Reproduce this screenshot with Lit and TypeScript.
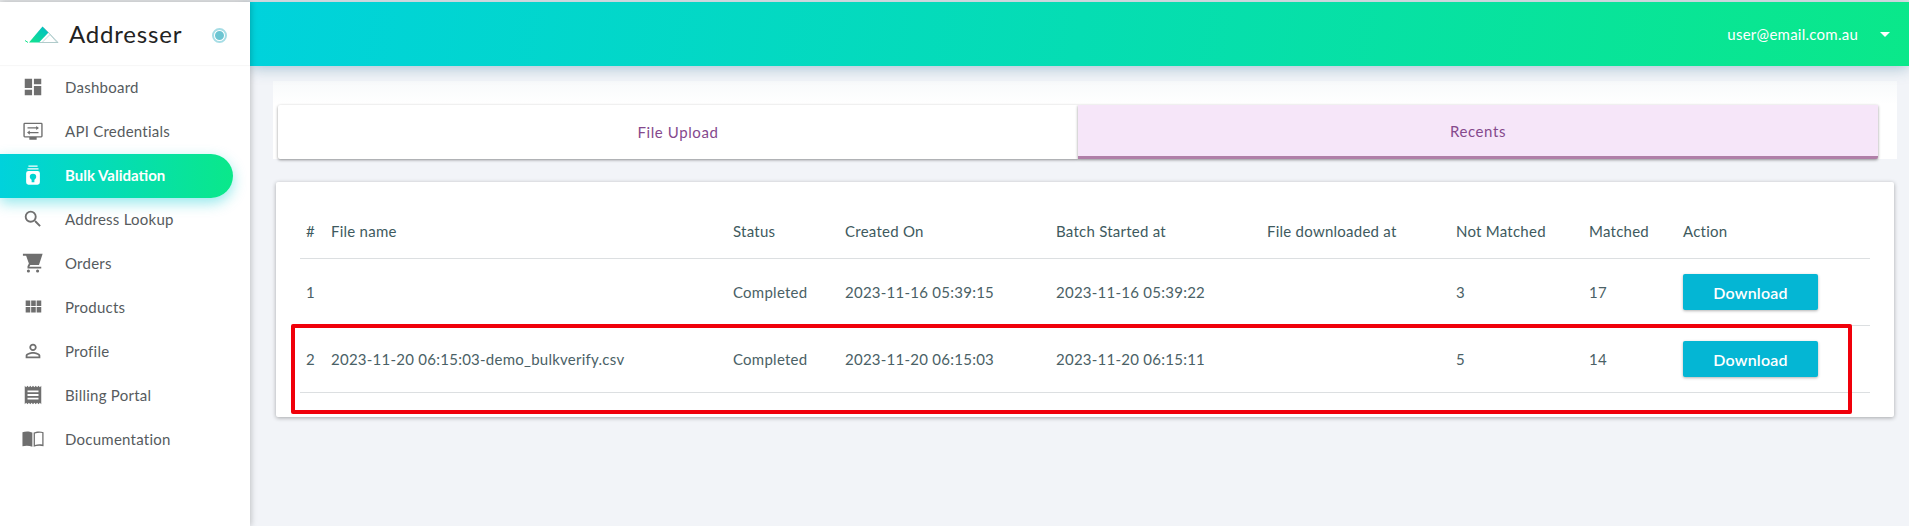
import { LitElement, html, css, svg } from "lit";
import { customElement } from "lit/decorators.js";

const P = (d: string) => svg`<path d=${d}></path>`;
const nav = [
  { label: "Dashboard", icon: P("M3 13h8V3H3v10zm0 8h8v-6H3v6zm10 0h8V11h-8v10zm0-18v6h8V3h-8z") },
  { label: "API Credentials", icon: svg`<path fill-rule="evenodd" d="M3 3h18a1.500 1.500 0 0 1 1.500 1.500v13A1.500 1.500 0 0 1 21 19h-5v2.500H8V19H3a1.500 1.500 0 0 1-1.500-1.500v-13A1.500 1.500 0 0 1 3 3zm0 1.300v13.400h18V4.300z"></path><path d="M6 8h9.500V6.500L18.500 8.700 15.500 11V9.400H6zM18 13H8.500v-1.500L5.500 13.700 8.500 16v-1.600H18z"></path>` },
  { label: "Bulk Validation", active: true, icon: svg`<path d="M7 1.500h10V3H7zM6 4.500h12V6H6zM7 7.500h10A2.500 2.500 0 0 1 19.500 10v10a2.500 2.500 0 0 1-2.500 2.500H7A2.500 2.500 0 0 1 4.500 20V10A2.500 2.500 0 0 1 7 7.500zM12 10.500a3.500 3.500 0 0 0-3.500 3.500c0 1.500 1 2.500 2 3.200V20h3v-2.800c1-.7 2-1.700 2-3.200a3.500 3.500 0 0 0-3.500-3.500z" fill-rule="evenodd"></path>` },
  { label: "Address Lookup", icon: P("M15.500 14h-.79l-.28-.27A6.471 6.471 0 0 0 16 9.500 6.500 6.500 0 1 0 9.500 16c1.610 0 3.090-.59 4.230-1.570l.27.28v.79l5 4.990L20.490 19l-4.990-5zm-6 0C7.010 14 5 11.990 5 9.500S7.010 5 9.500 5 14 7.010 14 9.500 11.990 14 9.500 14z") },
  { label: "Orders", icon: P("M7 19a1.700 1.700 0 1 0 0 3.400A1.700 1.700 0 0 0 7 19zm10 0a1.700 1.700 0 1 0 0 3.400 1.700 1.700 0 0 0 0-3.400zM1 2v2h3.500l3 8.500L6 15.500V18h15v-2H8l1-1.800h9.500L22.500 2z") },
  { label: "Products", icon: P("M4 11h5V5H4v6zm0 7h5v-6H4v6zm6 0h5v-6h-5v6zm6 0h5v-6h-5v6zm-6-7h5V5h-5v6zm6-6v6h5V5h-5z") },
  { label: "Profile", icon: P("M12 5.900a2.100 2.100 0 1 1 0 4.200 2.100 2.100 0 0 1 0-4.200m0 9c2.970 0 6.100 1.460 6.100 2.100v1.100H5.900V17c0-.64 3.130-2.100 6.100-2.100M12 4C9.790 4 8 5.790 8 8s1.790 4 4 4 4-1.790 4-4-1.790-4-4-4zm0 9c-2.670 0-8 1.340-8 4v3h16v-3c0-2.660-5.330-4-8-4z") },
  { label: "Billing Portal", icon: P("M18 17H6v-2h12v2zm0-4H6v-2h12v2zm0-4H6V7h12v2zM3 22l1.500-1.500L6 22l1.500-1.500L9 22l1.500-1.500L12 22l1.500-1.500L15 22l1.500-1.500L18 22l1.500-1.500L21 22V2l-1.500 1.500L18 2l-1.500 1.500L15 2l-1.500 1.500L12 2l-1.500 1.500L9 2 7.500 3.500 6 2 4.500 3.500 3 2v20z") },
  { label: "Documentation", icon: P("M.5 4.500C3.500 3.500 8 3.300 11.300 5v15.500C8 19 3.500 19 .5 20zM12.700 5C16 3.300 20.500 3.500 23.500 4.500V20c-3-1-7.500-1-10.800.5zm1.400.9v12.600c2.500-.9 5.700-1 8-.5V5.500c-2.300-.5-5.500-.4-8 .4z") },
];

const columns = ["#", "File name", "Status", "Created On", "Batch Started at", "File downloaded at", "Not Matched", "Matched", "Action"];
const rows = [
  ["1", "", "Completed", "2023-11-16 05:39:15", "2023-11-16 05:39:22", "", "3", "17"],
  ["2", "2023-11-20 06:15:03-demo_bulkverify.csv", "Completed", "2023-11-20 06:15:03", "2023-11-20 06:15:11", "", "5", "14"],
];

@customElement("app-root")
export class AppRoot extends LitElement {
  static styles = css`
    :host {
      display: block;
      height: 526px;
      overflow: hidden;
      background: #f2f4f8;
      font-family: "Lato", "Liberation Sans", sans-serif;
      font-size: 15px;
      letter-spacing: 0.25px;
    }
    .app { display: flex; height: 526px; border-top: 2px solid #e4e6e8; box-sizing: border-box; }
    .side {
      width: 250px; flex: none; background: #fff;
      box-shadow: 1px 0 6px rgba(0, 0, 0, 0.22);
      position: relative; z-index: 3;
    }
    .brand {
      height: 63px; display: flex; align-items: center; padding-left: 24px;
      box-shadow: 0 1px 1px rgba(0, 0, 0, 0.03);
    }
    .brand svg { width: 36px; height: 20px; flex: none; margin-top: 2px; }
    .brand .name { margin-left: 9px; font-size: 24px; letter-spacing: 0.8px; color: #222; font-weight: 400; }
    .ring {
      width: 9px; height: 9px; border-radius: 50%; background: #6cc5d2;
      border: 2px solid #fff; outline: 2px solid #a6dde5; outline-offset: -1px;
      margin-left: 31px; margin-top: 4px;
    }
    .menu { display: flex; flex-direction: column; padding-top: 1px; }
    .item {
      height: 44px; display: flex; align-items: center; width: 233px; box-sizing: border-box;
      padding: 0 0 2px 22px; color: #565b5e; border-radius: 0 24px 24px 0;
    }
    .item svg { width: 22px; height: 22px; fill: #6f6f6f; flex: none; margin-right: 21px; }
    .item.on {
      background: linear-gradient(90deg, #00d2dc, #0ae88a);
      color: #fff; font-weight: 700; letter-spacing: 0;
      box-shadow: 0 5px 14px rgba(0, 200, 210, 0.42);
    }
    .item.on svg { fill: #fff; }
    .main { flex: 1; min-width: 0; display: flex; flex-direction: column; }
    .top {
      height: 64px; flex: none; display: flex; align-items: center; justify-content: flex-end;
      background: linear-gradient(100deg, #00d2dc, #0ae88a);
      box-shadow: 0 2px 14px rgba(40, 110, 150, 0.38);
      color: #fff; padding-right: 19px; position: relative; z-index: 2;
    }
    .caret {
      width: 0; height: 0; border: 5px solid transparent; border-top: 5px solid #fff; border-bottom: 0;
      margin-left: 22px;
    }
    .content { position: relative; flex: 1; padding: 15px 12px 0 23px; }
    .tabs-panel {
      height: 78px; box-sizing: border-box; padding: 24px 19px 0 5px;
      background: linear-gradient(#f8fafb, #fff 30%);
      display: flex;
    }
    .tab {
      flex: 1; height: 54px; box-sizing: border-box; display: flex; align-items: center; justify-content: center;
      color: #85498d; font-size: 15px; letter-spacing: 0.6px; background: #fff;
      box-shadow: 0 1px 3px rgba(0, 0, 0, 0.42); border-radius: 2px 0 0 2px;
    }
    .tab.on { background: #f6e6f9; border-bottom: 3px solid #b07fa8; border-radius: 0 0 2px 0; }
    .card {
      margin: 23px 3px 0 3px; height: 235px; box-sizing: border-box; background: #fff; border-radius: 2px;
      box-shadow: 0 1px 4px rgba(0, 0, 0, 0.32); padding: 10px 24px 0 24px;
    }
    .row {
      display: grid; grid-template-columns: 25px 402px 112px 211px 211px 189px 133px 94px 1fr;
      align-items: center; height: 67px; border-bottom: 1px solid #dcdfe1;
      padding-left: 6px; box-sizing: border-box; color: #4a6166;
    }
    .row.head { color: #3e5a5e; padding-top: 12px; }
    .btn {
      width: 135px; height: 36px; display: flex; align-items: center; justify-content: center;
      background: #04b6d4; color: #fff; border-radius: 2px; font-size: 16px; font-weight: 600; letter-spacing: 0.2px;
      box-shadow: 0 1px 3px rgba(0, 0, 0, 0.3);
    }
    .mark {
      position: absolute; left: 41px; top: 258px; width: 1561px; height: 90px; box-sizing: border-box;
      border: 4px solid #f0000a; border-radius: 2px; pointer-events: none;
    }
  `;

  render() {
    return html`<div class="app">
      <aside class="side">
        <div class="brand">
          <svg viewBox="0 0 36 20">
            <defs>
              <linearGradient id="lg" x1="0" y1="1" x2="1" y2="0">
                <stop offset="0" stop-color="#14e48c"></stop>
                <stop offset="1" stop-color="#00bcc8"></stop>
              </linearGradient>
            </defs>
            <path d="M1 15.500 4 17.500" stroke="#14e48c" stroke-width="1" fill="none"></path>
            <path d="M5 17.500 18.500 1.500 24.500 7.500 15 17.500z" fill="url(#lg)"></path>
            <path d="M19.500 2.500 34 17.500H15" fill="none" stroke="#8fb4b4" stroke-width=".7"></path>
            <path d="M18 17.500 26 9.500 33 17.500" fill="none" stroke="#a8c8c8" stroke-width=".7"></path>
          </svg>
          <span class="name">Addresser</span>
          <span class="ring"></span>
        </div>
        <nav class="menu">
          ${nav.map(
            (n) => html`<div class="item ${n.active ? "on" : ""}">
              <svg viewBox="0 0 24 24">${n.icon}</svg><span>${n.label}</span>
            </div>`
          )}
        </nav>
      </aside>
      <main class="main">
        <header class="top"><span>user@email.com.au</span><span class="caret"></span></header>
        <section class="content">
          <div class="tabs-panel">
            <div class="tab">File Upload</div>
            <div class="tab on">Recents</div>
          </div>
          <div class="card">
            <div class="row head">${columns.map((c) => html`<div>${c}</div>`)}</div>
            ${rows.map(
              (r) => html`<div class="row">
                ${r.map((c) => html`<div>${c}</div>`)}
                <div class="btn">Download</div>
              </div>`
            )}
          </div>
          <div class="mark"></div>
        </section>
      </main>
    </div>`;
  }
}
